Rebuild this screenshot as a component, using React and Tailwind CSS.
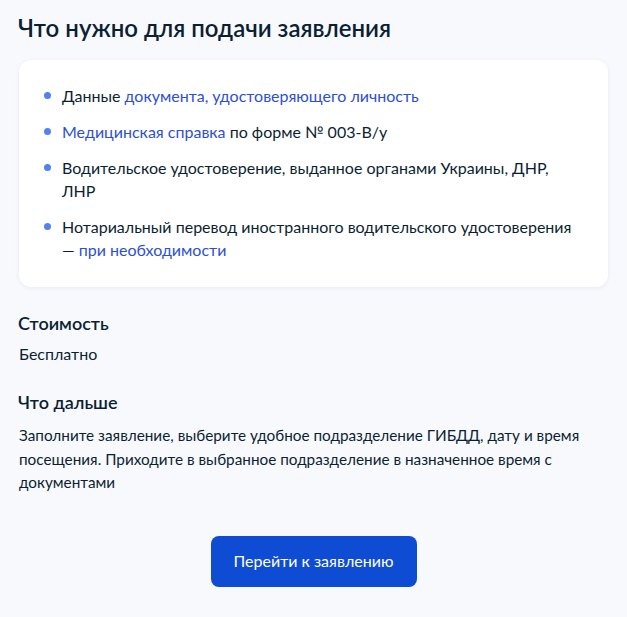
const items = [
  [{ t: 'Данные ' }, { t: 'документа, удостоверяющего личность', link: true }],
  [{ t: 'Медицинская справка', link: true }, { t: ' по форме № 003-В/у' }],
  [{ t: 'Водительское удостоверение, выданное органами Украины, ДНР, ЛНР' }],
  [{ t: 'Нотариальный перевод иностранного водительского удостоверения — ' }, { t: 'при необходимости', link: true }],
]

export default function App() {
  return (
    <div className="min-h-screen bg-[#f8f9fd] px-[19px] pt-[12px] pb-8 text-[#0b1f33]" style={{ fontFamily: 'Lato, "Noto Sans", sans-serif' }}>
      <h1 className="text-[24px] font-semibold leading-[32px] ml-[-1px]">Что нужно для подачи заявления</h1>

      <div className="mt-[16px] bg-white rounded-[12px] shadow-[0_1px_4px_rgba(40,70,140,0.08)] pl-[25px] pr-[30px] pt-[24px] pb-[26px]">
        <ul className="flex flex-col gap-[13px]">
          {items.map((parts, i) => (
            <li key={i} className="flex items-start text-[16px] leading-[23px]">
              <span className="w-[7px] h-[7px] rounded-full bg-[#5181f4] mt-[8px] mr-[12px] shrink-0" />
              <span className="ml-[-1px]">
                {parts.map((p, j) =>
                  p.link ? (
                    <a key={j} className="text-[#2d4fd6] cursor-pointer">{p.t}</a>
                  ) : (
                    <span key={j}>{p.t}</span>
                  )
                )}
              </span>
            </li>
          ))}
        </ul>
      </div>

      <h2 className="mt-[23px] text-[18px] font-semibold leading-[26px] ml-[-1px]">Стоимость</h2>
      <p className="mt-[6px] text-[16px] leading-[24px]">Бесплатно</p>

      <h2 className="mt-[23px] text-[18px] font-semibold leading-[26px] ml-[-1px]">Что дальше</h2>
      <p className="mt-[9px] text-[15.3px] leading-[23.5px]">
        Заполните заявление, выберите удобное подразделение ГИБДД, дату и время посещения. Приходите в выбранное подразделение в назначенное время с документами
      </p>

      <div className="mt-[41px] flex justify-center">
        <button className="w-[206px] h-[51px] rounded-[8px] bg-[#0d4cd3] text-white text-[16px]">
          Перейти к заявлению
        </button>
      </div>
    </div>
  )
}
